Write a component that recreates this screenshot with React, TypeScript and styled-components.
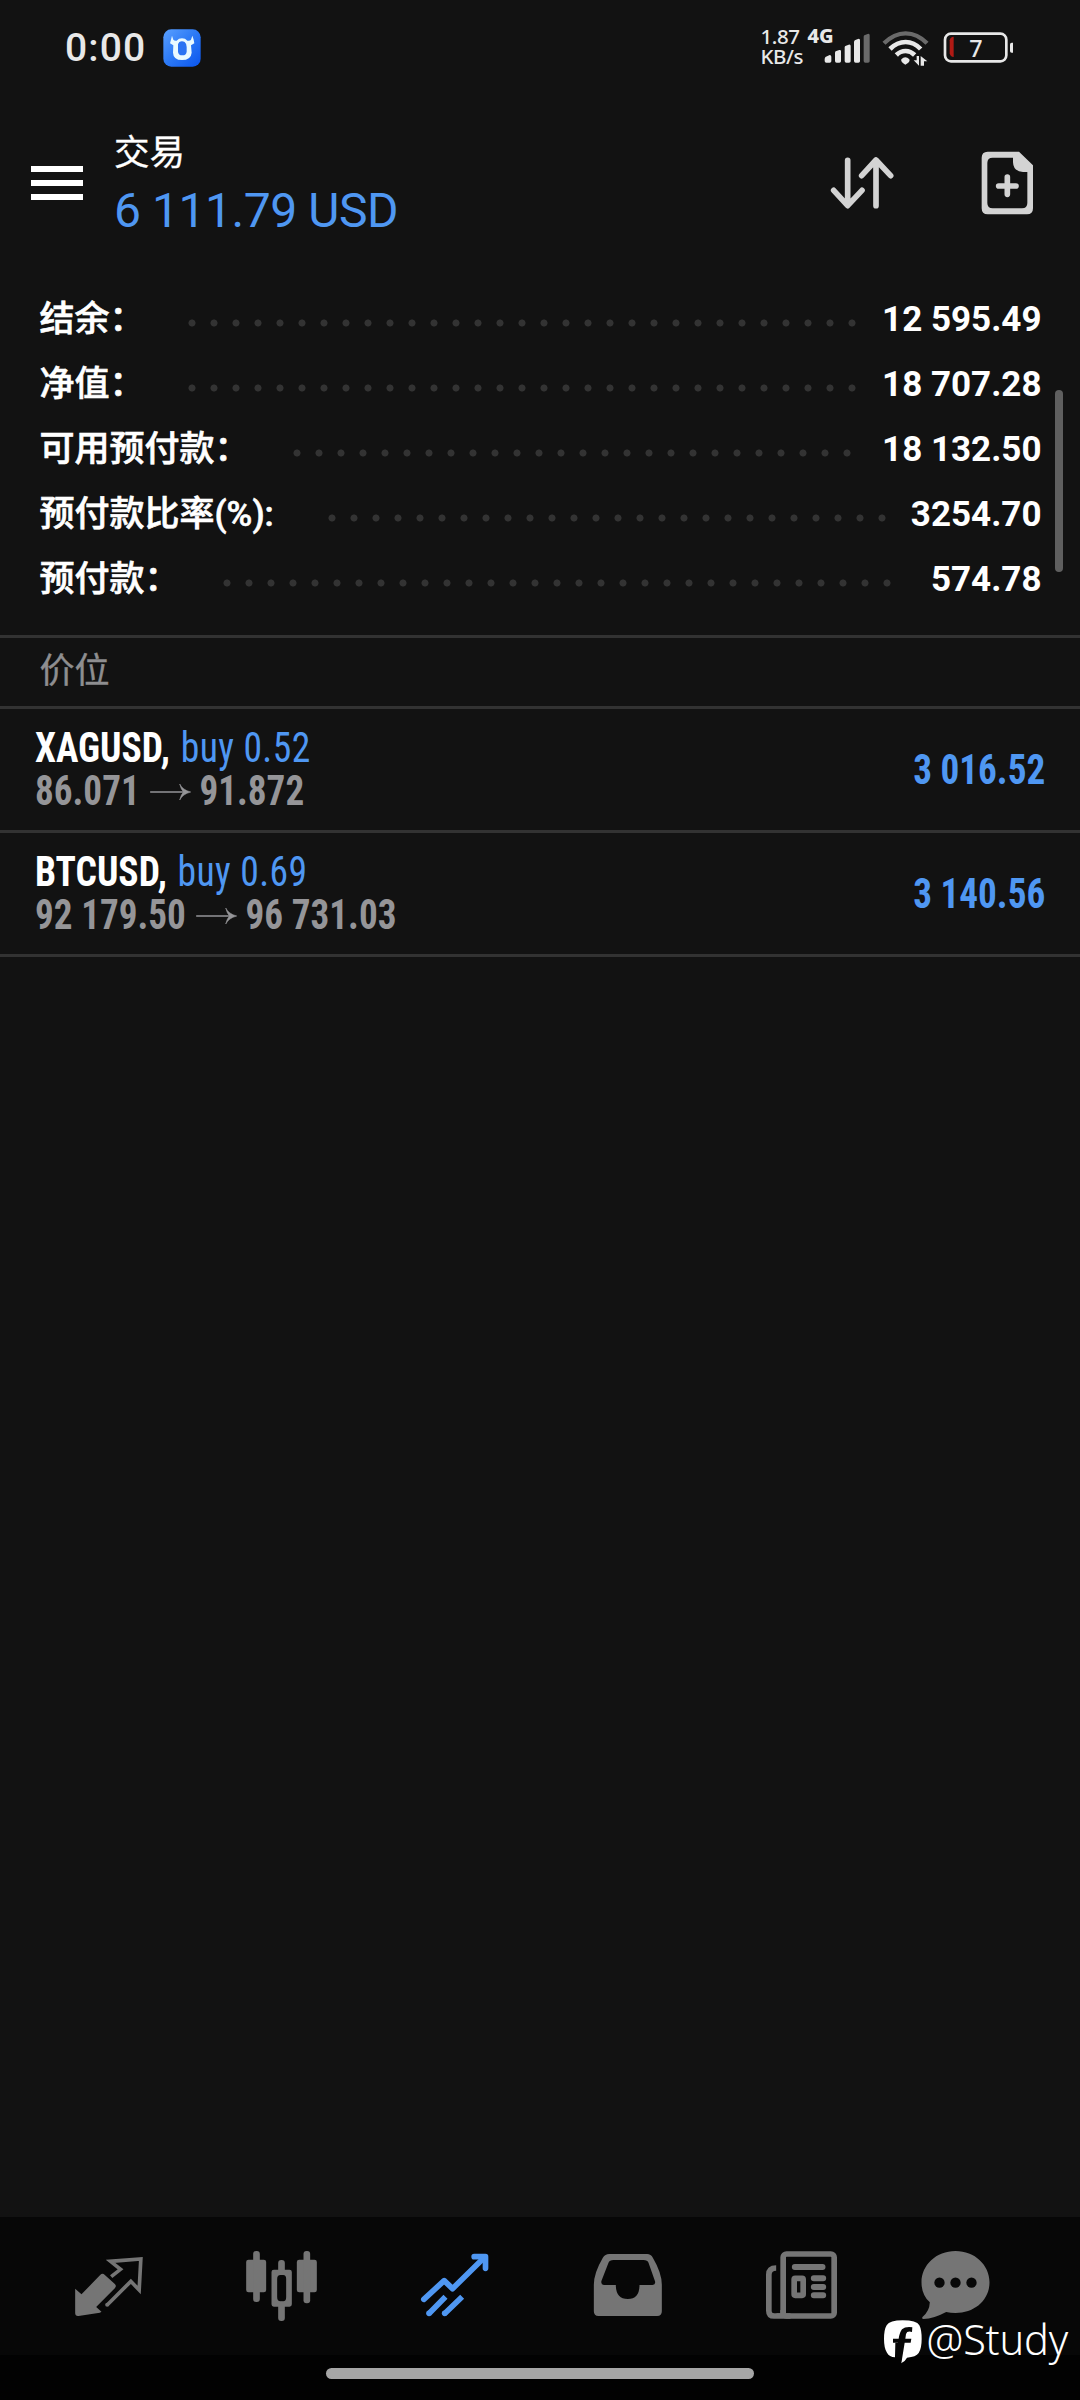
import React from "react";
import styled, { createGlobalStyle } from "styled-components";

const GlobalStyle = createGlobalStyle`
  body { margin: 0; background: #121212; }
  * { box-sizing: border-box; }
`;

const ui = `Roboto, "Noto Sans CJK SC", sans-serif`;
const condensed = `"Roboto Condensed", Roboto, sans-serif`;
const BLUE = "#4f97f2";

const Screen = styled.div`
  position: relative;
  display: flex;
  flex-direction: column;
  width: 1080px;
  height: 2400px;
  background: #121212;
  color: #fff;
  font-family: ${ui};
  white-space: nowrap;
  overflow: hidden;
`;

const StatusBar = styled.div`
  display: flex;
  align-items: center;
  justify-content: space-between;
  height: 94px;
  padding: 2px 67px 0 65px;
  color: #e8e8e8;
`;
const StatusLeft = styled.div`
  display: flex;
  align-items: center;
  gap: 19px;
`;
const Clock = styled.span`
  width: 79px;
  font: 500 39px/40px ${ui};
  letter-spacing: 1.1px;
`;
const StatusRight = styled.div`
  display: flex;
  align-items: center;
`;
const NetSpeed = styled.div`
  display: flex;
  flex-direction: column;
  width: 47px;
  margin-bottom: 4px;
  font: 500 20.5px/20px "Noto Sans", sans-serif;
  letter-spacing: -0.4px;
`;
const Network = styled.span`
  align-self: flex-start;
  width: 30px;
  font: 800 20px/20px "Noto Sans", sans-serif;
`;

const Header = styled.header`
  display: flex;
  align-items: center;
  height: 176px;
  padding: 2px 45px 0 31px;
`;
const MenuButton = styled.div`
  display: flex;
  flex-direction: column;
  gap: 8px;
  width: 52px;
  margin-right: 31px;
`;
const MenuBar = styled.span`
  height: 6px;
  background: #fff;
`;
const Titles = styled.div`
  flex: 1;
  margin-bottom: 2px;
`;
const Title = styled.div`
  font: 400 35.6px/58px ${ui};
  -webkit-text-stroke: 0.3px currentColor;
`;
const Profit = styled.div`
  font: 400 48px/58px ${ui};
  letter-spacing: -0.45px;
  color: ${BLUE};
`;
const Actions = styled.div`
  display: flex;
  gap: 87px;
`;

const Summary = styled.section`
  position: relative;
  padding: 16px 38.5px 24px 39.5px;
  border-bottom: 3px solid #323232;
`;
const SummaryRow = styled.div`
  display: flex;
  align-items: center;
  height: 65px;
`;
const Label = styled.span`
  padding-top: 2px;
  font: 500 35px/65px ${ui};
  -webkit-text-stroke: 0.6px currentColor;
`;
const Leader = styled.span<{ $dots: number; $gap: number }>`
  width: ${(p) => p.$dots * 22}px;
  height: 8px;
  margin: 9px auto 0 ${(p) => p.$gap}px;
  background: radial-gradient(circle at center, #333 3.1px, transparent 3.9px) 0 0 / 22px 8px repeat-x;
`;
const Value = styled.span`
  padding-top: 2px;
  font: 700 35px/65px ${ui};
`;
const ScrollThumb = styled.div`
  position: absolute;
  top: 120px;
  right: 17px;
  width: 8px;
  height: 182px;
  border-radius: 4px;
  background: #5f5f5f;
`;

const SectionTitle = styled.div`
  height: 71px;
  padding: 1px 0 0 39.5px;
  border-bottom: 3px solid #323232;
  font: 400 35px/65px ${ui};
  -webkit-text-stroke: 0.4px currentColor;
  color: #8e8e90;
`;

const Position = styled.div`
  display: flex;
  align-items: center;
  justify-content: space-between;
  height: 124px;
  padding: 0 35px;
  border-bottom: 3px solid #323232;
  font-family: ${condensed};
  font-size: 42px;
`;
const Details = styled.div`
  margin-bottom: 2px;
`;
const Line = styled.div<{ $squeeze: number }>`
  display: flex;
  align-items: center;
  line-height: 43px;
  transform: scaleX(${(p) => p.$squeeze});
  transform-origin: left center;
`;
const Symbol = styled.span`
  font-weight: 700;
  margin-right: 12px;
`;
const Side = styled.span`
  letter-spacing: 0.45px;
  color: ${BLUE};
`;
const Price = styled.span`
  font-weight: 700;
  color: #959598;
`;
const Gain = styled.span`
  font-weight: 700;
  color: ${BLUE};
  transform: scaleX(0.885);
  transform-origin: right center;
`;
const ArrowIcon = styled.svg`
  margin: 4px 9.3px 0 10.7px;
`;

const Spacer = styled.div`
  flex: 1;
`;
const TabBar = styled.nav`
  display: flex;
  height: 138px;
  padding: 0 20px 0 22px;
  background: #070707;
`;
const Tab = styled.div<{ $active?: boolean }>`
  display: flex;
  justify-content: center;
  width: 173px;
  padding-top: 23px;
  color: ${(p) => (p.$active ? BLUE : "#757575")};
`;
const TabIcon = styled.svg`
  width: 90px;
  height: 90px;
  overflow: visible;
`;
const GestureArea = styled.div`
  display: flex;
  justify-content: center;
  height: 45px;
  padding-top: 13px;
  background: #020202;
`;
const HomeBar = styled.div`
  width: 428px;
  height: 11px;
  border-radius: 6px;
  background: #a6a6a6;
`;
const Watermark = styled.div`
  position: absolute;
  right: 12px;
  bottom: 36px;
  display: flex;
  align-items: flex-end;
  gap: 4px;
`;
const Handle = styled.span`
  font: 350 41.5px/50px "Noto Sans", sans-serif;
  letter-spacing: -0.2px;
`;

const summary = [
  { label: "结余：", dots: 31, gap: 36.5, value: "12 595.49" },
  { label: "净值：", dots: 31, gap: 36.5, value: "18 707.28" },
  { label: "可用预付款：", dots: 26, gap: 36.5, value: "18 132.50" },
  { label: "预付款比率(%):", dots: 26, gap: 47.5, value: "3254.70" },
  { label: "预付款：", dots: 31, gap: 36.5, value: "574.78" },
];
const positions = [
  { symbol: "XAGUSD,", side: "buy 0.52", open: "86.071", now: "91.872", gain: "3 016.52" },
  { symbol: "BTCUSD,", side: "buy 0.69", open: "92 179.50", now: "96 731.03", gain: "3 140.56" },
];

const AppBadge = () => (
  <svg width="38" height="38" viewBox="0 0 114 114">
    <defs>
      <linearGradient id="badge" x1="0" y1="0" x2="1" y2="1">
        <stop offset="0" stopColor="#5aa0ff" />
        <stop offset="0.45" stopColor="#2f7cf6" />
        <stop offset="1" stopColor="#0a55ee" />
      </linearGradient>
    </defs>
    <rect x="1" y="1" width="112" height="112" rx="24" fill="url(#badge)" />
    <path
      d="M27 20 L31 32 Q34 36 41 35 Q47 28 57 28 Q67 28 73 35 Q82 36 84 32 L88 20 L92 32 L94 43 L84 49 L86 71 Q84 93 57 93 Q31 93 30 71 L31 49 L21 43 L24 32 Z"
      fill="#eafaff"
    />
    <path d="M49 39 Q57 34 65 39 Q71 44 71 54 V68 Q70 79 58 79 Q46 79 45 68 V54 Q43 44 49 39 Z" fill="#2c74f2" />
  </svg>
);

const StatusIcons = () => (
  <svg width="190" height="40" viewBox="250 84 570 120" style={{ marginLeft: -14.5 }}>
    <g fill="#e8e8e8">
      <path d="M255 176 Q256 170 262 169 L270 165 Q275 165 275 170 V184 Q275 188 270 188 H260 Q255 188 255 183Z" />
      <path d="M286 158 Q286 154 290 153 L299 150 Q304 149 304 154 V184 Q304 188 299 188 H291 Q286 188 286 183Z" />
      <path d="M315 142 Q315 138 319 137 L327 134 Q333 132 333 138 V184 Q333 188 328 188 H320 Q315 188 315 183Z" />
      <path d="M343 126 Q343 121 347 120 L355 117 Q361 115 361 121 V184 Q361 188 356 188 H348 Q343 188 343 183Z" />
      <path fill="#6a6a6a" d="M372 110 Q372 106 376 105 L384 102 Q390 100 390 106 V184 Q390 188 385 188 H377 Q372 188 372 183Z" />
      <path d="M497 194 Q482 186 485 178 Q497 165 509 178 Q513 186 497 194Z" />
      <path d="M531 168 H538 V197 L522 181 H531Z M543 197 V168 L563 184 H553 V197Z" />
    </g>
    <g fill="none" strokeLinecap="butt" strokeWidth="14">
      <path d="M433 130 Q463 100 498 100 Q533 100 562 130" stroke="#6a6a6a" strokeWidth="13" />
      <path d="M451 147 Q472 126 498 126 Q523 126 543 147" stroke="#e8e8e8" />
      <path d="M470 165 Q482 153 498 153 Q513 153 525 165" stroke="#e8e8e8" />
    </g>
    <rect x="616" y="101" width="184" height="83" rx="18" fill="none" stroke="#e8e8e8" strokeWidth="8" />
    <path d="M642 110 V171 Q632 171 630 160 V121 Q632 110 642 110Z" fill="#b01a14" />
    <rect x="811" y="128" width="13" height="30" rx="5" fill="#e8e8e8" />
    <text x="689" y="170" fill="#e8e8e8" fontFamily="Noto Sans" fontSize="70" fontWeight="500">7</text>
  </svg>
);

const SortIcon = () => (
  <svg width="64" height="64" viewBox="267 453 192 192" fill="none" stroke="#d3d3d3" strokeWidth="17" strokeLinecap="round" strokeLinejoin="round">
    <path d="M320 481 V616 M278 571 L320 617 L363 571" />
    <path d="M405 617 V481 M362 527 L405 480 L449 527" />
  </svg>
);
const NewOrderIcon = () => (
  <svg width="54" height="64" viewBox="722 453 162 192">
    <path
      fill="#d3d3d3"
      fillRule="evenodd"
      d="M742 455 H836 L878 496 V625 Q878 643 860 643 H742 Q724 643 724 625 V473 Q724 455 742 455Z M757 473 Q741 473 741 489 V609 Q741 625 757 625 H845 Q861 625 861 609 V516 H848 Q819 514 818 487 V473Z"
    />
    <path d="M801 531 V583 M775 558 H827" stroke="#d3d3d3" strokeWidth="17" strokeLinecap="round" />
  </svg>
);
const PriceArrow = () => (
  <ArrowIcon width="47.5" height="18" viewBox="0 0 42 18" preserveAspectRatio="none">
    <path d="M1 9 H36" stroke="#959598" strokeWidth="1.4" />
    <path d="M30.5 1 Q33.5 7 41.5 9 Q33.500 11 30.500 17 Q32 11 34.500 9 Q32 7 30.500 1Z" fill="#959598" stroke="#959598" strokeWidth="0.6" />
  </ArrowIcon>
);

const QuotesIcon = () => (
  <TabIcon viewBox="10.5 0 270 270">
    <path fill="currentColor" d="M44 146 L63 163 L119 105 Q126 98 133 105 L163 132 Q169 138 163 145 L107 201 L123 215 L118 218 L54 228 Q44 229 44 219Z" />
    <path fill="none" stroke="currentColor" strokeWidth="11" strokeLinejoin="miter" d="M152 110 L180 88 L150 64 L241 57 L236 150 L211 124 L140 195" />
    <circle cx="140" cy="194" r="6" fill="currentColor" />
  </TabIcon>
);
const ChartsIcon = () => (
  <TabIcon viewBox="529.5 0 270 270">
    <g fill="currentColor">
      <rect x="557" y="59" width="60" height="98" rx="7" />
      <rect x="578" y="33" width="20" height="153" rx="9" />
      <rect x="709" y="59" width="60" height="98" rx="7" />
      <rect x="729" y="33" width="20" height="157" rx="9" />
      <rect x="653" y="60" width="20" height="40" rx="9" />
      <rect x="653" y="185" width="20" height="58" rx="9" />
      <path fillRule="evenodd" d="M640 89 H687 Q694 89 694 96 V193 Q694 200 687 200 H640 Q633 200 633 193 V96 Q633 89 640 89Z M660 105 Q650 105 650 117 V171 Q650 184 660 184 H668 Q677 184 677 171 V117 Q677 105 668 105Z" />
    </g>
  </TabIcon>
);
const TradeIcon = () => (
  <TabIcon viewBox="-1.5 0 270 270" fill="none" stroke="currentColor" strokeWidth="17">
    <path strokeLinejoin="round" strokeLinecap="round" d="M40 178 L101 122 L126 146 L222 52" />
    <path strokeLinecap="round" strokeLinejoin="round" d="M191 50 H225 V85" />
    <path d="M55 221 L105 170 M102 221 L155 170" />
    <g fill="currentColor" stroke="none">
      <circle cx="55.5" cy="220" r="8.5" />
      <circle cx="102.5" cy="220" r="8.5" />
    </g>
  </TabIcon>
);
const InboxIcon = () => (
  <TabIcon viewBox="517.5 0 270 270">
    <path
      fill="currentColor"
      fillRule="evenodd"
      d="M596 42 H710 Q721 42 727 53 Q754 99 754 134 V214 Q754 228 740 228 H564 Q550 228 550 214 V134 Q550 99 577 53 Q584 42 596 42Z M609 60 Q597 60 594 68 L573 122 Q570 134 580 135 H616 Q616 177 652 177 Q687 177 687 135 H726 Q737 134 733 122 L714 68 Q711 60 699 60Z"
    />
  </TabIcon>
);
const NewsIcon = () => (
  <TabIcon viewBox="16.5 0 270 270" fill="none" stroke="currentColor" strokeWidth="17">
    <rect x="98" y="42" width="153" height="186" rx="10" />
    <path d="M77 84 Q55 84 55 104 V212 Q55 228 71 228 H120" />
    <path d="M92 210 V222 H78" strokeWidth="5" />
    <path strokeLinecap="round" strokeWidth="18" d="M133 81 H216 M190 115 H218 M190 141 H218 M190 166 H218" />
    <rect x="131" y="115" width="27" height="51" rx="3" />
  </TabIcon>
);
const ChatIcon = () => (
  <TabIcon viewBox="535.5 0 270 270">
    <path fill="currentColor" d="M615 33 C673 33 717 75 717 127 C717 180 673 219 615 219 Q600 219 587 216 Q550 236 519 237 Q513 236 516 231 Q537 214 538 187 C521 172 513 151 513 127 C513 75 557 33 615 33Z" />
    <g fill="#070707">
      <circle cx="567" cy="128" r="15.5" />
      <circle cx="615" cy="128" r="15.5" />
      <circle cx="663" cy="128" r="15.5" />
    </g>
  </TabIcon>
);
const SocialLogo = () => (
  <svg width="38" height="44" viewBox="399 239 114 132">
    <path fill="#fff" d="M455 240 Q497 240 505 255 Q512 268 512 296 Q512 325 503 338 Q495 350 468 352 Q462 364 450 369 L453 307 H433 L432 351 Q415 350 408 337 Q399 325 399 296 Q399 268 407 255 Q416 240 455 240Z" />
    <path fill="#070707" d="M484 261 L483 275 Q468 271 465 281 L463 295 H481 L479 307 H461 L451 369 Q447 360 447 352 L434 351 L441 307 H426 V295 H443 Q446 276 453 267 Q463 258 484 261Z" />
  </svg>
);

export default function App() {
  return (
    <Screen>
      <GlobalStyle />
      <StatusBar>
        <StatusLeft>
          <Clock>0:00</Clock>
          <AppBadge />
        </StatusLeft>
        <StatusRight>
          <NetSpeed>
            <span>1.87</span>
            <span>KB/s</span>
          </NetSpeed>
          <Network>4G</Network>
          <StatusIcons />
        </StatusRight>
      </StatusBar>
      <Header>
        <MenuButton>
          <MenuBar />
          <MenuBar />
          <MenuBar />
        </MenuButton>
        <Titles>
          <Title>交易</Title>
          <Profit>6 111.79 USD</Profit>
        </Titles>
        <Actions>
          <SortIcon />
          <NewOrderIcon />
        </Actions>
      </Header>
      <Summary>
        {summary.map((row) => (
          <SummaryRow key={row.label}>
            <Label>{row.label}</Label>
            <Leader $dots={row.dots} $gap={row.gap} />
            <Value>{row.value}</Value>
          </SummaryRow>
        ))}
        <ScrollThumb />
      </Summary>
      <SectionTitle>价位</SectionTitle>
      {positions.map((p) => (
        <Position key={p.symbol}>
          <Details>
            <Line $squeeze={0.895}>
              <Symbol>{p.symbol}</Symbol>
              <Side>{p.side}</Side>
            </Line>
            <Line $squeeze={0.885}>
              <Price>{p.open}</Price>
              <PriceArrow />
              <Price>{p.now}</Price>
            </Line>
          </Details>
          <Gain>{p.gain}</Gain>
        </Position>
      ))}
      <Spacer />
      <TabBar>
        <Tab><QuotesIcon /></Tab>
        <Tab><ChartsIcon /></Tab>
        <Tab $active><TradeIcon /></Tab>
        <Tab><InboxIcon /></Tab>
        <Tab><NewsIcon /></Tab>
        <Tab><ChatIcon /></Tab>
      </TabBar>
      <GestureArea>
        <HomeBar />
      </GestureArea>
      <Watermark>
        <SocialLogo />
        <Handle>@Study</Handle>
      </Watermark>
    </Screen>
  );
}
